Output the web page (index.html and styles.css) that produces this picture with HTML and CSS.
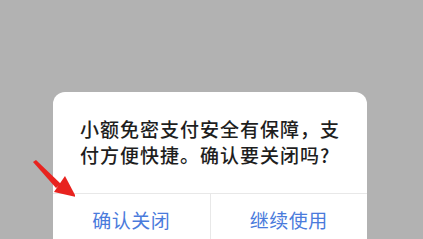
FILE: index.html
```html
<!DOCTYPE html>
<html lang="zh-CN">
<head>
<meta charset="utf-8">
<link rel="stylesheet" href="styles.css">
</head>
<body>
<div class="screen">
  <div class="dialog">
    <p class="message">小额免密支付安全有保障，支付方便快捷。确认要关闭吗?</p>
    <div class="actions">
      <div class="btn">确认关闭</div>
      <div class="btn">继续使用</div>
    </div>
  </div>
  <svg class="arrow" width="50" height="45" viewBox="0 0 50 45">
    <path d="M8 5 L11 3 L36 27 L31 31 Z" fill="#e8231f"/>
    <path d="M40 19 L51 40 L29 35 Z" fill="#e8231f"/>
  </svg>
</div>
</body>
</html>
```

FILE: styles.css
```css
html, body {
  margin: 0;
  padding: 0;
}
body {
  background: #b2b2b2;
  font-family: "Noto Sans CJK SC", "Noto Sans", sans-serif;
  overflow: hidden;
}
.screen {
  position: relative;
  width: 423px;
  height: 239px;
  padding-top: 92px;
  box-sizing: border-box;
}
.dialog {
  margin-left: 53px;
  width: 314px;
  background: #fff;
  border-radius: 12px 12px 0 0;
}
.message {
  margin: 0;
  padding: 24px 17px 25px 27px;
  font-size: 19px;
  line-height: 26px;
  letter-spacing: 1px;
  font-weight: 500;
  color: #1e1e1e;
}
.actions {
  display: flex;
  border-top: 1px solid #e8e8e8;
}
.btn {
  flex: 1;
  height: 50px;
  display: flex;
  align-items: center;
  justify-content: center;
  font-size: 19px;
  letter-spacing: 0.5px;
  color: #4a7bdc;
}
.btn + .btn {
  border-left: 1px solid #e8e8e8;
}
.arrow {
  position: absolute;
  left: 25px;
  top: 157px;
}
```
